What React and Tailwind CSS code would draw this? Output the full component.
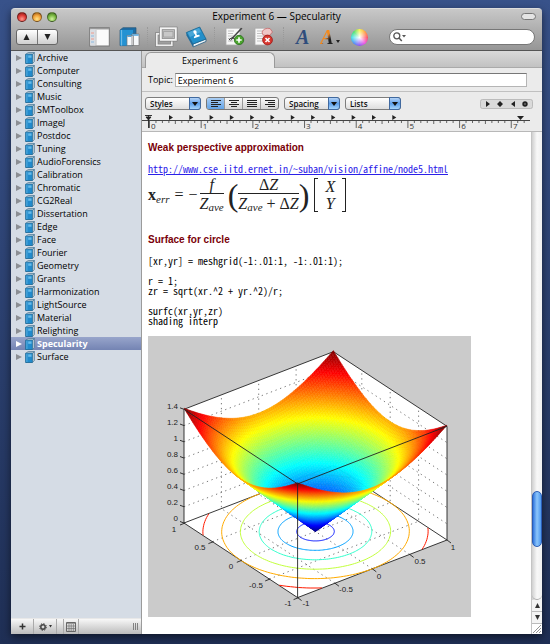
import { useState } from 'react';

const notebooks = [
  'Archive', 'Computer', 'Consulting', 'Music', 'SMToolbox', 'ImageJ', 'Postdoc', 'Tuning',
  'AudioForensics', 'Calibration', 'Chromatic', 'CG2Real', 'Dissertation', 'Edge', 'Face',
  'Fourier', 'Geometry', 'Grants', 'Harmonization', 'LightSource', 'Material', 'Relighting',
  'Specularity', 'Surface',
];

const code = `[xr,yr] = meshgrid(-1:.01:1, -1:.01:1);

r = 1;
zr = sqrt(xr.^2 + yr.^2)/r;

surfc(xr,yr,zr)
shading interp`;

// ---- surface plot ----

const project = (x, y, z) => [167.5 + 74.7 * x - 56.8 * y, 195.5 - 28.8 * x - 37.3 * y - 81.2 * z];
const pts = (...list) => list.map((p) => project(...p).map((n) => n.toFixed(1)).join(',')).join(' ');

function jet(z) {
  const t = Math.min(z / 1.414, 1);
  const ch = (c) => Math.round(255 * Math.max(0, Math.min(1, 1.5 - Math.abs(4 * t - c))));
  return `rgb(${ch(3)},${ch(2)},${ch(1)})`;
}

const N = 80;
const quads = [];
for (let i = N - 1; i >= 0; i--) {
  for (let j = N - 1; j >= 0; j--) {
    const [x0, x1, y0, y1] = [i, i + 1, j, j + 1].map((k) => (2 * k) / N - 1);
    const h = Math.hypot;
    quads.push({
      points: pts([x0, y0, h(x0, y0)], [x1, y0, h(x1, y0)], [x1, y1, h(x1, y1)], [x0, y1, h(x0, y1)]),
      fill: jet(h((x0 + x1) / 2, (y0 + y1) / 2)),
    });
  }
}

function ring(r) {
  let d = '';
  let pen = false;
  for (let a = 0; a <= 360; a += 2) {
    const x = r * Math.cos((a * Math.PI) / 180);
    const y = r * Math.sin((a * Math.PI) / 180);
    const inside = Math.abs(x) <= 1.001 && Math.abs(y) <= 1.001;
    if (inside) d += `${pen ? 'L' : 'M'}${pts([x, y, 0])} `;
    pen = inside;
  }
  return d;
}

const H = 1.4;
const grid = [];
[-0.5, 0, 0.5].forEach((t) => {
  grid.push(pts([t, -1, 0], [t, 1, 0], [t, 1, H]));
  grid.push(pts([-1, t, 0], [1, t, 0], [1, t, H]));
});
[0.2, 0.4, 0.6, 0.8, 1, 1.2].forEach((z) => grid.push(pts([-1, 1, z], [1, 1, z], [1, -1, z])));

const zTicks = ['0', '0.2', '0.4', '0.6', '0.8', '1', '1.2', '1.4'];
const floorTicks = [
  ['1', 26, 196], ['0.5', 52, 214], ['0', 83, 233], ['-0.5', 108, 252], ['-1', 140, 270],
  ['-1', 158, 270], ['-0.5', 198, 256], ['0', 231, 243], ['0.5', 272, 228], ['1', 305, 214],
];

function SurfacePlot() {
  return (
    <svg width="323" height="281" viewBox="0 0 323 281" role="img" aria-label="Surface for circle" className="block bg-[#cbcbcb]">
      <polygon points={pts([-1, 1, 0], [-1, 1, H], [1, 1, H], [1, -1, H], [1, -1, 0], [-1, -1, 0])} fill="#fff" />
      <g fill="none" stroke="#555" strokeWidth="0.8" strokeDasharray="1.3 3.6">
        {grid.map((g) => <polyline key={g} points={g} />)}
      </g>
      <g fill="none" stroke="#222" strokeWidth="0.9">
        <polygon points={pts([-1, 1, 0], [1, 1, 0], [1, -1, 0], [-1, -1, 0])} />
        <polyline points={pts([-1, 1, 0], [-1, 1, H], [1, 1, H], [1, -1, H], [1, -1, 0])} />
      </g>
      <g fill="none" strokeWidth="1">
        {[0.2, 0.4, 0.6, 0.8, 1, 1.2].map((r) => <path key={r} d={ring(r)} stroke={jet(r)} />)}
      </g>
      <g strokeWidth="0.5">
        {quads.map((q, i) => <polygon key={i} points={q.points} fill={q.fill} stroke={q.fill} />)}
      </g>
      <g fill="none" stroke="#222" strokeWidth="0.9">
        <polyline points={pts([-1, 1, H], [-1, -1, H], [1, -1, H])} />
        <polyline points={pts([-1, -1, H], [-1, -1, 0])} />
        {zTicks.map((t) => {
          const [x, y] = project(-1, 1, Number(t));
          return <path key={t} d={`M${x} ${y}l-4 -1.5`} />;
        })}
        {[-1, -0.5, 0, 0.5, 1].map((t) => {
          const [ax, ay] = project(-1, t, 0);
          const [bx, by] = project(t, -1, 0);
          return <path key={t} d={`M${ax + 1} ${ay}l-5 2M${bx} ${by}l4 3`} />;
        })}
      </g>
      <g fill="#222" fontSize="8" fontFamily="Liberation Sans, Arial, sans-serif">
        {zTicks.map((t, i) => <text key={t} x="30" y={185 - i * 16} textAnchor="end">{t}</text>)}
        {floorTicks.map(([t, x, y]) => <text key={x} x={x} y={y} textAnchor="middle">{t}</text>)}
      </g>
    </svg>
  );
}

// ---- icons ----

function BookIcon() {
  return (
    <svg width="10" height="12" viewBox="0 0 10 12" className="shrink-0">
      <path d="M1 2.2L3.2.5H9.4V9.5L7.4 11.6H1Z" fill="#b9c9d3" stroke="#4c7590" strokeWidth="0.7" />
      <path d="M.6 2.2H7.4V11.5H.6Z" fill="#218bcd" stroke="#1b6794" strokeWidth="0.7" />
      <path d="M1.9 2.6V11" stroke="#67b9e5" strokeWidth="0.8" />
      <path d="M3.2 3.4H6.5V5.8H3.2Z" fill="#69bce9" />
      <path d="M7.5 2.2L9.4.6" stroke="#28658c" strokeWidth="0.7" />
    </svg>
  );
}

function SidebarIcon() {
  return (
    <svg width="21" height="20" viewBox="0 0 21 20">
      <rect x=".7" y=".7" width="19.6" height="18.3" fill="#fbfbfb" stroke="#777" />
      <path d="M1 1.7H20" stroke="#999" strokeWidth="1.5" />
      <path d="M1.2 2.5H6.5V18.5H1.2Z" fill="#d9dde2" />
      <path d="M2 6H5M2 12H5" stroke="#ef9c8e" />
      <path d="M2 9H5M2 15H5" stroke="#8bbbe2" />
      <path d="M7 3V18.5" stroke="#aaa" strokeWidth=".7" />
    </svg>
  );
}

function NotebookIcon() {
  return (
    <svg width="21" height="20" viewBox="0 0 21 20">
      <path d="M1 3L4 .7H17V16L14 18.6H1Z" fill="#1d6da5" stroke="#2a5878" strokeWidth=".7" />
      <path d="M1 3H14V18.6H1Z" fill="#2492d3" />
      <path d="M2.6 3V18.6" stroke="#76bfe9" />
      <path d="M8 8.5H14.5V18.5H8ZM13 7H20V18.5H13Z" fill="#f6f8fa" stroke="#777" strokeWidth=".7" />
      <path d="M8.3 9.3H12.5M13.3 8H19.7" stroke="#54a5dd" strokeWidth="1.3" />
    </svg>
  );
}

function WindowsIcon() {
  return (
    <svg width="23" height="22" viewBox="0 0 23 22" fill="none">
      <rect x="1.8" y="7.8" width="15" height="11.5" stroke="#777" strokeWidth="3" />
      <rect x="1.8" y="7.8" width="15" height="11.5" stroke="#ededed" strokeWidth="1.8" />
      <rect x="5.8" y="2.3" width="15" height="11.5" fill="#bdbdbd" stroke="#777" strokeWidth="3.2" />
      <rect x="5.8" y="2.3" width="15" height="11.5" stroke="#f4f4f4" strokeWidth="2" />
      <path d="M8.5 5.500H18V11H8.500Z" fill="#c8c8c8" stroke="#999" strokeWidth=".7" />
    </svg>
  );
}

function AddressBookIcon() {
  return (
    <svg width="22" height="22" viewBox="0 0 22 22">
      <path d="M1.300 6.600L8 18V20.900L1.500 9.500Z" fill="#1c6ea3" />
      <path d="M8 18L21 13V15.500L8.300 20.900Z" fill="#eef3f6" stroke="#255c80" strokeWidth=".8" />
      <path d="M1.3 6.6L14.7 1L21 13L8 18Z" fill="#238fca" stroke="#1b6690" strokeWidth=".8" />
      <path d="M2.8 6.6L14 2L16 6L5 11Z" fill="#69bce4" opacity=".55" />
      <path d="M8.300 5.200Q9.500 3.600 11.200 4.700Q12.200 6.200 11.300 7.500L12 9L14.300 8.800L14.800 10.200L9.200 12.300L8.800 10.900L10.400 9.600L9.900 8.200Q8.300 7.400 8.300 5.200Z" fill="#fff" />
    </svg>
  );
}

function PageIcon({ remove }) {
  return (
    <svg width="20" height="20" viewBox="0 0 20 20">
      <path d="M1 1.2H15V18H1Z" fill="#f7f7f7" stroke="#aaa" strokeWidth=".8" />
      <path d="M3 4H9M3 6.5H8M3 9H10M3 11.5H9M3 14H8" stroke="#b3b3b3" strokeWidth=".8" />
      {remove ? (
        <>
          <path d="M8 5Q10 .5 16 1.5L18.5 5L15 9L9 8Z" fill="#eec6c6" stroke="#c25d5d" strokeWidth=".7" />
          <circle cx="13.5" cy="13" r="4.9" fill="#d7372f" stroke="#9c1713" strokeWidth=".8" />
          <path d="M11.5 11L15.500 15M15.500 11L11.500 15" stroke="#fff" strokeWidth="1.6" />
        </>
      ) : (
        <>
          <path d="M17.500 1.500L8 11.5L5 14.5L7 10.5L16 .8Z" fill="#444" />
          <path d="M4 13Q8 8 11 14" fill="none" stroke="#333" />
          <circle cx="14" cy="13" r="4.7" fill="#4ba42d" stroke="#27691a" strokeWidth=".8" />
          <path d="M14 10.300V15.700M11.300 13H16.700" stroke="#fff" strokeWidth="1.6" />
        </>
      )}
    </svg>
  );
}

function Divider() {
  return <span className="h-5 border-l border-dotted border-[#999]" />;
}

function TitleBar() {
  const lights = [
    ['Close', 'bg-[radial-gradient(circle_at_50%_75%,#ff9b90,#df3d38_50%,#7d1613)]'],
    ['Minimize', 'bg-[radial-gradient(circle_at_50%_75%,#ffe589,#f2a43c_50%,#8e5012)]'],
    ['Zoom', 'bg-[radial-gradient(circle_at_50%_75%,#d3f5a0,#7dbb45_50%,#3a661a)]'],
  ];
  return (
    <header className="border-b border-[#555] bg-linear-to-b from-[#c8c8c8] to-[#969696] rounded-t-[4px] border-t border-t-[#ddd]">
      <div className="grid grid-cols-[1fr_auto_1fr] items-center h-[15px] px-[6px]">
        <div className="flex gap-[5px]">
          {lights.map(([name, color]) => (
            <button key={name} aria-label={name} className={`size-[10px] rounded-full border border-black/40 ${color}`} />
          ))}
        </div>
        <h1 className="text-[10px] leading-[15px] text-black">Experiment 6 — Specularity</h1>
        <button aria-label="Toggle toolbar" className="justify-self-end w-[15px] h-[7px] rounded-full border border-[#777] bg-[#e4e4e4]" />
      </div>
      <div className="flex items-center h-[26px] pl-[5px] pr-[7px]">
        <div className="flex w-[42px] h-4 border border-[#666] rounded-[3px] bg-linear-to-b from-white to-[#cfcfcf]">
          <button aria-label="Previous" className="flex-1 flex items-center justify-center border-r border-[#777]">
            <svg width="7" height="6"><path d="M3.5 0L6.5 6H.5Z" fill="#222" /></svg>
          </button>
          <button aria-label="Next" className="flex-1 flex items-center justify-center">
            <svg width="7" height="6"><path d="M3.5 6L6.5 0H.5Z" fill="#222" /></svg>
          </button>
        </div>
        <div className="flex items-center gap-[9px] ml-[31px]">
          <button aria-label="Sidebar"><SidebarIcon /></button>
          <button aria-label="Notebook"><NotebookIcon /></button>
        </div>
        <div className="flex items-center gap-[7px] ml-[7px]">
          <Divider />
          <button aria-label="Windows"><WindowsIcon /></button>
          <button aria-label="Address book"><AddressBookIcon /></button>
          <Divider />
        </div>
        <div className="flex items-center gap-[9px] ml-[10px]">
          <button aria-label="Add page"><PageIcon /></button>
          <button aria-label="Delete page"><PageIcon remove /></button>
          <Divider />
        </div>
        <div className="flex items-center ml-3 gap-[11px] font-['Liberation_Serif',serif] font-bold italic text-[20px] leading-5">
          <button aria-label="Fonts" className="text-[#2f4d7c]">A</button>
          <button aria-label="Text color" className="flex items-end">
            <span className="bg-linear-to-br from-[#f38a1d] from-45% to-[#222] to-60% bg-clip-text text-transparent pr-[2px]">A</span>
            <svg width="4" height="8"><path d="M0 1H4L2 4Z" fill="#222" /></svg>
          </button>
          <button aria-label="Colors" className="size-[17px] rounded-full bg-[radial-gradient(circle,#fff,transparent_70%),conic-gradient(#f6f34a,#ff9b3d,#ff4a5e,#f04ddd,#8d4df5,#4a8ef5,#3fe0e8,#48e26a,#f6f34a)]" />
        </div>
        <label className="flex items-center flex-1 ml-[21px] h-4 rounded-full bg-white border border-[#777] px-[3px]">
          <svg width="14" height="10" viewBox="0 0 14 10" fill="none" className="shrink-0">
            <circle cx="3.8" cy="3.8" r="3" stroke="#555" strokeWidth="1.3" />
            <path d="M6 6L8.8 9" stroke="#555" strokeWidth="1.5" />
            <path d="M9 3H13L11 5.5Z" fill="#555" />
          </svg>
          <input type="search" aria-label="Search" className="min-w-0 flex-1 text-[9px] outline-none" />
        </label>
      </div>
    </header>
  );
}

function Sidebar({ selected, onSelect }) {
  return (
    <aside className="flex flex-col w-[131px] shrink-0 bg-[#d5dce5] border-r border-[#9b9b9b]">
      <ul className="flex-1">
        {notebooks.map((n) => (
          <li key={n}>
            <button
              onClick={() => onSelect(n)}
              className={`flex items-center w-full h-[13px] pl-[5px] text-[9px] leading-[13px] ${n === selected ? 'bg-linear-to-b from-[#98a5cb] to-[#7484b3] text-white font-bold' : 'text-black'}`}
            >
              <svg width="6" height="6" className={`mr-[3px] ${n === selected ? 'text-white' : 'text-[#8c8f94]'}`}>
                <path d="M0 0L6 3L0 6Z" fill="currentColor" />
              </svg>
              <BookIcon />
              <span className="ml-[2px]">{n}</span>
            </button>
          </li>
        ))}
      </ul>
      <footer className="flex h-4 bg-linear-to-b from-[#f8f8f8] to-[#bcbcbc] border-t border-[#e8e8e8]">
        <button aria-label="Add" className="w-[23px] flex items-center justify-center border-r border-[#aaa]">
          <svg width="7" height="7"><path d="M3.5 .5V6.5M.5 3.5H6.5" stroke="#333" strokeWidth="1.5" /></svg>
        </button>
        <button aria-label="Actions" className="w-[23px] flex items-center justify-center gap-[2px] border-r border-[#aaa]">
          <svg width="8" height="8" viewBox="0 0 8 8" fill="none" stroke="#444">
            <circle cx="4" cy="4" r="2.2" strokeWidth="1.5" />
            <circle cx="4" cy="4" r="3.4" strokeWidth="1" strokeDasharray="1.3 1.37" />
          </svg>
          <svg width="3" height="3"><path d="M0 0H3L1.5 2.5Z" fill="#333" /></svg>
        </button>
        <button aria-label="Calendar" className="w-4 ml-[6px] flex items-center justify-center border-x border-[#aaa]">
          <svg width="10" height="10" viewBox="0 0 10 10" fill="none" stroke="#666">
            <path d="M.5 .5H9.5V9.5H.5Z" />
            <path d="M.5 1.5H9.5M.5 4H9.5M.5 6.5H9.5M3 2V9.5M5.2 2V9.5M7.4 2V9.5" strokeWidth=".6" />
          </svg>
        </button>
        <svg width="7" height="7" className="ml-auto mr-[2px] self-center"><path d="M1.5 0V7M3.5 0V7M5.5 0V7" stroke="#777" strokeWidth=".9" /></svg>
      </footer>
    </aside>
  );
}

function Menu({ label }) {
  return (
    <div className="relative w-14 h-[13px]">
      <select
        aria-label={label}
        className="appearance-none block w-full h-full pl-[4px] text-[8px] leading-[11px] font-semibold border border-[#7d7d7d] rounded-[3px] bg-linear-to-b from-white to-[#dedede] text-[#111]"
      >
        <option>{label}</option>
      </select>
      <span className="absolute right-0 top-0 h-full w-3 flex items-center justify-center rounded-r-[3px] border border-[#40699f] bg-linear-to-b from-[#b5d3f6] via-[#5c9eea] to-[#a5d4fb] pointer-events-none">
        <svg width="6" height="4"><path d="M0 0H6L3 4Z" fill="#111" /></svg>
      </span>
    </div>
  );
}

const aligns = [
  ['Align left', 'M0 .5H10M0 2.5H7M0 4.5H10M0 6.5H7'],
  ['Center', 'M0 .5H10M2 2.5H8M0 4.5H10M2 6.5H8'],
  ['Justify', 'M0 .5H10M0 2.5H10M0 4.5H10M0 6.5H10'],
  ['Align right', 'M0 .5H10M3 2.5H10M0 4.5H10M3 6.5H10'],
];

function FormatBar() {
  const [align, setAlign] = useState('Align left');
  return (
    <div className="flex items-center gap-[5px] h-[23px] pl-[3px] pr-[9px]">
      <Menu label="Styles" />
      <div className="flex w-[73px] h-[13px] border border-[#777] rounded-[3px] overflow-hidden divide-x divide-[#999] bg-linear-to-b from-[#fafafa] to-[#d4d4d4]">
        {aligns.map(([name, d]) => (
          <button
            key={name}
            aria-label={name}
            onClick={() => setAlign(name)}
            className={`flex-1 flex items-center justify-center ${align === name ? 'bg-linear-to-b from-[#a9cdf3] to-[#62a3e6]' : ''}`}
          >
            <svg width="10" height="7"><path d={d} stroke="#222" /></svg>
          </button>
        ))}
      </div>
      <Menu label="Spacing" />
      <Menu label="Lists" />
      <svg width="53" height="10" viewBox="0 0 53 10" className="ml-auto rounded-[2px] bg-[#dadada]" fill="#222">
        <rect x=".5" y=".5" width="52" height="9" rx="2" fill="none" stroke="#bbb" />
        <path d="M6 2L10 5L6 8ZM20 2L23 5L20 8L17 5ZM35 2L31 5L35 8Z" />
        <circle cx="45" cy="5" r="2.7" />
        <circle cx="45" cy="5" r=".8" fill="#999" />
      </svg>
    </div>
  );
}

function Ruler() {
  const stops = Array.from({ length: 12 }, (_, i) => 27 + i * 20.3);
  const ticks = Array.from({ length: 59 }, (_, i) => i);
  return (
    <svg width="100%" height="17" className="block border-b border-[#b8b8b8]">
      <path d="M0 5.5H388" stroke="#444" />
      <path d="M3 .5H10M6.5 0V13M4 2H9L6.5 5Z" stroke="#222" fill="#222" strokeWidth=".9" />
      {stops.map((x) => <path key={x} d={`M${x} 0L${x + 4} 2.5L${x} 5Z`} fill="#222" />)}
      <path d="M375 1H382L378.5 5Z" fill="#222" />
      {ticks.map((t) => (
        <path key={t} d={`M${7.500 + t * 6.46} 6v${t % 8 === 0 ? 7 : t % 4 === 0 ? 3 : 2}`} stroke="#555" strokeWidth=".9" />
      ))}
      <g fill="#333" fontSize="8">
        {[0, 1, 2, 3, 4, 5, 6, 7].map((n) => <text key={n} x={9 + n * 51.7} y="14">{n}</text>)}
      </g>
    </svg>
  );
}

function Formula() {
  return (
    <div className="flex items-center h-9 font-['Liberation_Serif',serif] text-[16px] leading-4 text-[#222]">
      <span><b>x</b><sub className="italic text-[11px] leading-none">err</sub></span>
      <span className="mx-[5px]">=</span>
      <span className="mr-[2px]">−</span>
      <span className="inline-flex flex-col items-center italic">
        <span className="self-stretch text-center border-b border-[#222]">f</span>
        <span className="leading-5">Z<sub className="text-[11px] leading-none">ave</sub></span>
      </span>
      <span className="text-[32px] leading-8 ml-1">(</span>
      <span className="inline-flex flex-col items-center">
        <span className="self-stretch text-center border-b border-[#222]">Δ<i>Z</i></span>
        <span className="leading-5 whitespace-nowrap"><i>Z<sub className="text-[11px] leading-none">ave</sub></i> + Δ<i>Z</i></span>
      </span>
      <span className="text-[32px] leading-8">)</span>
      <span className="w-1 h-[34px] ml-[5px] border-l border-y border-[#222]" />
      <span className="flex flex-col items-center gap-px px-[7px] italic">
        <span>X</span>
        <span>Y</span>
      </span>
      <span className="w-1 h-[34px] border-r border-y border-[#222]" />
    </div>
  );
}

function Scrollbar() {
  return (
    <div className="flex flex-col w-[11px] shrink-0 border-l border-[#c4c4c4] bg-linear-to-r from-[#d0d0d0] via-[#f8f8f8] to-[#f0f0f0]">
      <div className="flex-1 flex flex-col justify-end pb-[52px] rounded-b-full border-b border-[#aaa]">
        <div className="h-14 rounded-full border border-[#2a5cb5] bg-linear-to-r from-[#2e73dc] via-[#8cc6fb] to-[#4c97ee]" />
      </div>
      <button aria-label="Scroll up" className="h-3 flex items-center justify-center bg-[#f4f4f4] border-b border-[#bbb]">
        <svg width="5" height="5"><path d="M2.500 0L5 5H0Z" fill="#333" /></svg>
      </button>
      <button aria-label="Scroll down" className="h-3 flex items-center justify-center bg-[#f4f4f4] border-b border-[#bbb]">
        <svg width="5" height="5"><path d="M2.500 5L5 0H0Z" fill="#333" /></svg>
      </button>
      <svg width="10" height="10" className="bg-white"><path d="M1 9L9 1M4 9L9 4M7 9L9 7" stroke="#888" strokeWidth=".9" /></svg>
    </div>
  );
}

export default function App() {
  const [selected, setSelected] = useState('Specularity');

  return (
    <div className="min-h-screen flex flex-col pt-2 pb-[10px] pl-[11px] pr-2 bg-linear-to-b from-[#38528a] to-[#1f2f55] font-['Open_Sans','Noto_Sans',sans-serif] text-black">
      <div className="flex-1 flex flex-col rounded-t-[4px] shadow-[0_3px_8px_rgba(0,0,0,0.55)]">
        <TitleBar />
        <div className="flex-1 flex">
          <Sidebar selected={selected} onSelect={setSelected} />
          <main className="flex-1 min-w-0 flex flex-col bg-[#ebebeb]">
            <div className="flex h-[17px] pl-[3px] pt-px bg-linear-to-b from-[#dadada] to-[#c2c2c2] border-b border-[#aaa]">
              <div className="w-[130px] h-4 rounded-t-[6px] border border-b-0 border-[#999] bg-[#ebebeb] text-center text-[9px] leading-[15px]">
                Experiment 6
              </div>
            </div>
            <div className="flex items-center gap-[2px] h-6 pl-[6px] pr-[15px] pt-px border-b border-[#c0c0c0] text-[9px]">
              <label htmlFor="topic">Topic:</label>
              <input
                id="topic"
                defaultValue="Experiment 6"
                className="flex-1 min-w-0 h-[14px] px-[2px] bg-white border border-[#b5b5b5] border-t-[#777] outline-none"
              />
            </div>
            <FormatBar />
            <Ruler />
            <div className="flex-1 flex bg-white">
              <article className="flex-1 min-w-0 pl-[6px] pt-[9px] pb-[17px]">
                <h2 className="font-['Liberation_Sans',Arial,sans-serif] font-bold text-[10px] leading-[14px] text-[#7a0008]">
                  Weak perspective approximation
                </h2>
                <a
                  href="http://www.cse.iitd.ernet.in/~suban/vision/affine/node5.html"
                  className="block mt-[9px] mb-[3px] font-['Noto_Sans_Mono_CJK_SC','DejaVu_Sans_Mono',monospace] text-[10px] leading-[10px] text-[#2a20e8] underline"
                >
                  http://www.cse.iitd.ernet.in/~suban/vision/affine/node5.html
                </a>
                <Formula />
                <h2 className="mt-5 font-['Liberation_Sans',Arial,sans-serif] font-bold text-[10px] leading-[14px] text-[#7a0008]">
                  Surface for circle
                </h2>
                <pre className="mt-[9px] mb-[10px] font-['Noto_Sans_Mono_CJK_SC','DejaVu_Sans_Mono',monospace] text-[10px] leading-[10px]">
                  {code}
                </pre>
                <SurfacePlot />
              </article>
              <Scrollbar />
            </div>
          </main>
        </div>
      </div>
    </div>
  );
}
